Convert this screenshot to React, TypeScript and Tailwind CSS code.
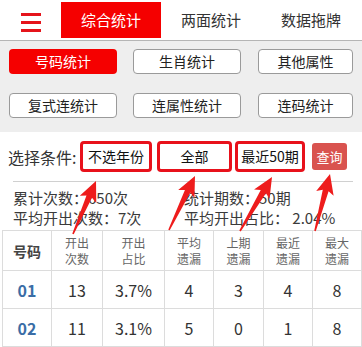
import React from "react";

const tabs = ["综合统计", "两面统计", "数据拖牌"];

const buttonRows = [
  ["号码统计", "生肖统计", "其他属性"],
  ["复式连统计", "连属性统计", "连码统计"],
];

const headers = [
  ["号码"],
  ["开出", "次数"],
  ["开出", "占比"],
  ["平均", "遗漏"],
  ["上期", "遗漏"],
  ["最近", "遗漏"],
  ["最大", "遗漏"],
];

const rows = [
  ["01", "13", "3.7%", "4", "3", "4", "8"],
  ["02", "11", "3.1%", "5", "0", "1", "8"],
];

const colWidths = ["w-[49px]", "w-[51px]", "w-[62px]", "w-[49px]", "w-[50px]", "w-[49px]", "w-[49px]"];

// annotation arrows: tail -> tip
const arrows = [
  [73, 234, 96, 181],
  [169, 230, 195, 176],
  [240, 231, 272, 177],
  [315, 231, 330, 174],
];

function arrowPoints([tx, ty, px, py]: number[]) {
  const dx = px - tx;
  const dy = py - ty;
  const len = Math.hypot(dx, dy);
  const ux = dx / len;
  const uy = dy / len;
  const nx = -uy;
  const ny = ux;
  const H = 17;
  const W = 9;
  const S = 3;
  const bx = px - ux * H;
  const by = py - uy * H;
  const wx = px - ux * (H + 3);
  const wy = py - uy * (H + 3);
  const pts = [
    [tx + nx * 0.8, ty + ny * 0.8],
    [bx + nx * S, by + ny * S],
    [wx + nx * W, wy + ny * W],
    [px, py],
    [wx - nx * W, wy - ny * W],
    [bx - nx * S, by - ny * S],
    [tx - nx * 0.8, ty - ny * 0.8],
  ];
  return pts.map((p) => p.join(",")).join(" ");
}

export default function App() {
  return (
    <div className="relative w-[362px] h-[347px] overflow-hidden bg-white text-[#333] font-['Microsoft_YaHei','Noto_Sans_CJK_SC',sans-serif]">
      {/* top tabs */}
      <div className="flex h-[41px] border-b border-[#b5b5b5] bg-white">
        <div className="w-[61px] flex flex-col items-center pt-[13px] gap-[5px]">
          <span className="w-[20px] h-[3px] bg-[#e5141b]" />
          <span className="w-[20px] h-[3px] bg-[#e5141b]" />
          <span className="w-[20px] h-[3px] bg-[#e5141b]" />
        </div>
        {tabs.map((t, i) => (
          <div
            key={t}
            className={
              i === 0
                ? "w-[100px] mt-[2px] h-[36px] bg-[#f50000] text-white text-[15px] flex items-center justify-center"
                : "w-[100px] h-[40px] text-[15px] text-[#333] flex items-center justify-center"
            }
          >
            {t}
          </div>
        ))}
      </div>

      {/* sub buttons */}
      <div className="bg-[#eeeeee] pt-[8px] pb-[14px] flex flex-col gap-[19px]">
        {buttonRows.map((row, r) => (
          <div key={r} className="flex pl-[9px]">
            {row.map((b, i) => (
              <div
                key={b}
                className={[
                  "h-[25px] rounded-[4px] flex items-center justify-center text-[14px]",
                  i === 0 ? "w-[108px]" : i === 1 ? "w-[108px] ml-[16px]" : "w-[95px] ml-[17px]",
                  r === 0 && i === 0
                    ? "bg-[#f50000] text-white"
                    : "bg-white border border-[#9a9a9a] text-[#222]",
                ].join(" ")}
              >
                {b}
              </div>
            ))}
          </div>
        ))}
      </div>

      {/* filter */}
      <div className="flex items-center pt-[9px] pl-[8px]">
        <span className="w-[72px] text-[16px] text-[#333]">选择条件:</span>
        <div className="w-[72px] h-[31px] border-[3px] border-[#e8111b] rounded-[4px] flex items-center justify-center text-[14px] text-[#111]">
          不选年份
        </div>
        <div className="w-[75px] h-[31px] ml-[5px] border-[3px] border-[#e8111b] rounded-[4px] flex items-center justify-center text-[14px] text-[#111]">
          全部
        </div>
        <div className="w-[70px] h-[31px] ml-[3px] border-[3px] border-[#e8111b] rounded-[4px] flex items-center justify-center text-[14px] text-[#111]">
          最近50期
        </div>
        <div className="w-[35px] h-[27px] ml-[7px] bg-[#d9534f] rounded-[3px] flex items-center justify-center text-[13px] text-white">
          查询
        </div>
      </div>
      <div className="ml-[13px] mt-[9px] w-[340px] h-px bg-[#d0d0d0]" />

      {/* stats */}
      <div className="pt-[6px] pl-[13px] grid grid-cols-[171px_1fr] text-[15px] leading-[20px] text-[#3a3a3a]">
        <span>累计次数：650次</span>
        <span>统计期数：50期</span>
        <span>平均开出次数：7次</span>
        <span>平均开出占比： 2.04%</span>
      </div>

      {/* table */}
      <table className="ml-[2px] mt-[2px] border-collapse table-fixed w-[359px]">
        <thead>
          <tr className="h-[40px]">
            {headers.map((h, i) => (
              <th
                key={i}
                className={[
                  colWidths[i],
                  "border border-[#dcdcdc] align-middle p-0",
                  i === 0
                    ? "text-[14px] font-semibold text-[#444]"
                    : "text-[12px] font-normal text-[#666]",
                ].join(" ")}
              >
                {h.map((l) => (
                  <div key={l} className={i === 0 ? "leading-[20px]" : "leading-[16px]"}>
                    {l}
                  </div>
                ))}
              </th>
            ))}
          </tr>
        </thead>
        <tbody>
          {rows.map((r) => (
            <tr key={r[0]} className="h-[38px]">
              {r.map((c, i) => (
                <td
                  key={i}
                  className={
                    i === 0
                      ? "border border-[#dcdcdc] text-center text-[16px] font-bold text-[#3a6da6] p-0"
                      : "border border-[#dcdcdc] text-center text-[16px] text-[#333] p-0"
                  }
                >
                  {c}
                </td>
              ))}
            </tr>
          ))}
        </tbody>
      </table>

      {/* annotation arrows */}
      <svg className="absolute inset-0 pointer-events-none" width="362" height="347">
        {arrows.map((a, i) => (
          <polygon key={i} points={arrowPoints(a)} fill="#ee1c1c" />
        ))}
      </svg>
    </div>
  );
}
